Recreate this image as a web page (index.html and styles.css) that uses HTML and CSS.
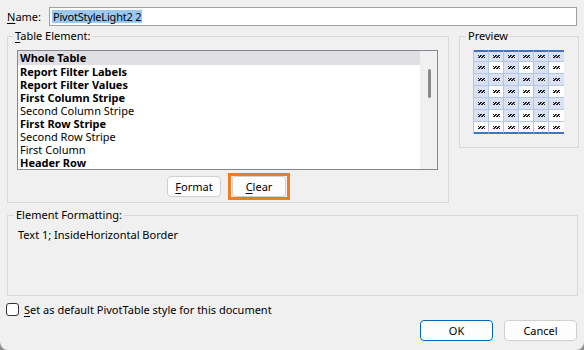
FILE: index.html
```html
<!DOCTYPE html>
<html>
<head>
<meta charset="utf-8">
<link rel="stylesheet" href="styles.css">
</head>
<body>
<div class="dialog">
  <div class="name-row">
    <span class="name-label"><u>N</u>ame:</span>
    <div class="name-input"><span class="sel">PivotStyleLight2 2</span></div>
  </div>
  <div class="middle">
    <fieldset class="group table-group">
      <legend><u>T</u>able Element:</legend>
      <div class="listbox">
        <div class="rows">
          <div class="row bold selected">Whole Table</div>
          <div class="row bold">Report Filter Labels</div>
          <div class="row bold">Report Filter Values</div>
          <div class="row bold">First Column Stripe</div>
          <div class="row">Second Column Stripe</div>
          <div class="row bold">First Row Stripe</div>
          <div class="row">Second Row Stripe</div>
          <div class="row">First Column</div>
          <div class="row bold">Header Row</div>
        </div>
        <div class="scrollbar"><div class="thumb"></div></div>
      </div>
      <div class="btn-row">
        <button class="btn"><u>F</u>ormat</button>
        <span class="focus-ring"><button class="btn"><u>C</u>lear</button></span>
      </div>
    </fieldset>
    <fieldset class="group preview-group">
      <legend>Preview</legend>
      <div class="grid">
        <div class="c h"><i></i></div><div class="c h"><i></i></div><div class="c h"><i></i></div><div class="c h"><i></i></div><div class="c h"><i></i></div><div class="c h"><i></i></div>
        <div class="c s"><i></i></div><div class="c w"><i></i></div><div class="c s"><i></i></div><div class="c w"><i></i></div><div class="c s"><i></i></div><div class="c w"><i></i></div>
        <div class="c s"><i></i></div><div class="c s"><i></i></div><div class="c s"><i></i></div><div class="c s"><i></i></div><div class="c s"><i></i></div><div class="c s"><i></i></div>
        <div class="c s"><i></i></div><div class="c w"><i></i></div><div class="c s"><i></i></div><div class="c w"><i></i></div><div class="c s"><i></i></div><div class="c w"><i></i></div>
        <div class="c s"><i></i></div><div class="c s"><i></i></div><div class="c s"><i></i></div><div class="c s"><i></i></div><div class="c s"><i></i></div><div class="c s"><i></i></div>
        <div class="c s"><i></i></div><div class="c w"><i></i></div><div class="c s"><i></i></div><div class="c w"><i></i></div><div class="c s"><i></i></div><div class="c w"><i></i></div>
        <div class="c w t"><i></i></div><div class="c w t"><i></i></div><div class="c w t"><i></i></div><div class="c w t"><i></i></div><div class="c w t"><i></i></div><div class="c w t"><i></i></div>
      </div>
    </fieldset>
  </div>
  <fieldset class="group format-group">
    <legend>Element Formatting:</legend>
    <div class="format-text">Text 1; InsideHorizontal Border</div>
  </fieldset>
  <label class="check-row">
    <span class="checkbox"></span>
    <span><u>S</u>et as default PivotTable style for this document</span>
  </label>
  <div class="footer">
    <button class="btn big default">OK</button>
    <button class="btn big">Cancel</button>
  </div>
</div>
</body>
</html>
```
FILE: styles.css
```css
html { background: #8f8f8f; }
body {
  margin: 0;
  width: 584px;
  height: 350px;
  overflow: hidden;
  font-family: "Noto Sans", sans-serif;
  font-size: 11px;
  color: #000;
}
.dialog {
  width: 584px;
  height: 350px;
  background: #f0f0f0;
  border-radius: 0 0 8px 8px;
  box-sizing: border-box;
}
u { text-decoration: underline; text-underline-offset: 2px; }

.name-row {
  display: flex;
  align-items: center;
  padding: 7px 0 0 7px;
  height: 19px;
}
.name-label { width: 42px; line-height: 19px; }
.name-input {
  width: 528px;
  height: 19px;
  box-sizing: border-box;
  border: 1px solid #a0a0a0;
  background: #fff;
  padding-left: 2px;
  display: flex;
  align-items: center;
}
.sel {
  background: #99c9ef;
  line-height: 13px;
  padding: 0 1px;
  letter-spacing: -0.2px;
}

.middle {
  display: flex;
  gap: 10px;
  padding: 0 0 0 7px;
  margin-top: 2px;
  align-items: flex-start;
}
.group {
  margin: 0;
  border: 1px solid #d9d9d9;
  min-width: 0;
  box-sizing: border-box;
}
.group legend {
  padding: 0 2px;
  line-height: 16px;
}
.table-group {
  width: 442px;
  height: 175px;
  padding: 6px 10px 0 9px;
}
.table-group legend { margin-left: -4px; }
.listbox {
  width: 421px;
  height: 120px;
  box-sizing: border-box;
  border: 1px solid #828790;
  background: #fff;
  display: flex;
}
.rows { flex: 1; }
.row {
  height: 13px;
  line-height: 13px;
  padding-left: 2px;
  white-space: nowrap;
}
.row.bold { font-weight: bold; }
.row.selected { background: #e0dfe3; height: 14px; line-height: 14px; }
.scrollbar {
  width: 17px;
  background: #f0f0f0;
  position: relative;
}
.thumb {
  position: absolute;
  left: 8px;
  top: 18px;
  width: 3px;
  height: 29px;
  border-radius: 2px;
  background: #8a8a8a;
}
.btn-row {
  display: flex;
  justify-content: center;
  align-items: center;
  gap: 7px;
  margin-top: 3px;
  padding-left: 2px;
}
.btn {
  font-family: "Noto Sans", sans-serif;
  font-size: 11px;
  width: 54px;
  height: 21px;
  padding: 0;
  background: #fdfdfd;
  border: 1px solid #d0d0d0;
  border-radius: 4px;
  color: #000;
}
.focus-ring {
  display: flex;
  border: 3px solid #f47b20;
  padding: 0 1px;
}

.preview-group {
  width: 120px;
  height: 120px;
  padding: 6px 0 0 13px;
}
.preview-group legend { margin-left: -7px; }
.grid {
  display: grid;
  grid-template-columns: repeat(6, 15px);
  grid-auto-rows: 12px;
  width: 91px;
  border-left: 1px solid #b4c6e7;
}
.c {
  box-sizing: border-box;
  border-right: 1px solid #b4c6e7;
  border-bottom: 1px solid #b4c6e7;
  display: flex;
  align-items: center;
  justify-content: center;
}
.c.s, .c.h { background: #d9e1f2; }
.c.w { background: #fff; }
.c.h { border-top: 2px solid #4472c4; }
.c.t { border-bottom: 2px solid #4472c4; }
.c:nth-child(6n) { border-right: none; }
.c i {
  display: block;
  width: 7px;
  height: 3px;
  background:
    repeating-linear-gradient(135deg, #222 0 1px, transparent 1px 2px);
}

.format-group {
  width: 571px;
  height: 89px;
  margin: 4px 0 0 7px;
  padding: 4px 10px 0 10px;
}
.format-group legend { margin-left: -4px; }
.format-text { line-height: 16px; }

.check-row {
  display: flex;
  align-items: center;
  gap: 5px;
  margin: 5px 0 0 6px;
  height: 16px;
}
.checkbox {
  width: 13px;
  height: 13px;
  box-sizing: border-box;
  border: 1px solid #333;
  border-radius: 3px;
  background: #fff;
}
.footer {
  display: flex;
  justify-content: flex-end;
  gap: 11px;
  padding-right: 7px;
  margin-top: 3px;
}
.btn.big { width: 73px; height: 21px; }
.btn.default { border: 1px solid #0067c0; }
```
